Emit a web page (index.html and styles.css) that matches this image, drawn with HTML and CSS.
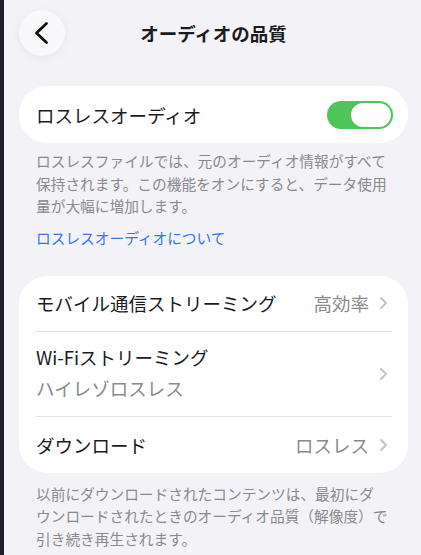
FILE: index.html
```html
<!DOCTYPE html>
<html lang="ja">
<head>
  <meta charset="UTF-8">
  <meta name="viewport" content="width=device-width, initial-scale=1.0">
  <title>オーディオの品質</title>
  <link rel="stylesheet" href="styles.css">
</head>
<body>
  <div class="page">
    <header class="header">
      <button class="back" aria-label="戻る">
        <svg width="16" height="24" viewBox="0 0 16 24">
          <path d="M13.5 2.5 L3.5 12 L13.5 21.5" fill="none" stroke="#111" stroke-width="2.8" stroke-linecap="round" stroke-linejoin="round"/>
        </svg>
      </button>
      <h1>オーディオの品質</h1>
      <span></span>
    </header>

    <section class="card card-toggle">
      <span class="label">ロスレスオーディオ</span>
      <span class="switch"><span class="knob"></span></span>
    </section>

    <p class="note">ロスレスファイルでは、元のオーディオ情報がすべて<br>保持されます。この機能をオンにすると、データ使用<br>量が大幅に増加します。</p>
    <a class="link" href="#">ロスレスオーディオについて</a>

    <section class="card list">
      <div class="row">
        <span class="label">モバイル通信ストリーミング</span>
        <span class="value">高効率</span>
        <svg class="chev" width="9" height="14" viewBox="0 0 9 14"><path d="M2 2 L7 7 L2 12" fill="none" stroke="#c5c5c8" stroke-width="2" stroke-linecap="round" stroke-linejoin="round"/></svg>
      </div>
      <div class="row row-tall">
        <div class="stack">
          <span class="label">Wi-Fiストリーミング</span>
          <span class="sub">ハイレゾロスレス</span>
        </div>
        <svg class="chev" width="9" height="14" viewBox="0 0 9 14"><path d="M2 2 L7 7 L2 12" fill="none" stroke="#c5c5c8" stroke-width="2" stroke-linecap="round" stroke-linejoin="round"/></svg>
      </div>
      <div class="row">
        <span class="label">ダウンロード</span>
        <span class="value">ロスレス</span>
        <svg class="chev" width="9" height="14" viewBox="0 0 9 14"><path d="M2 2 L7 7 L2 12" fill="none" stroke="#c5c5c8" stroke-width="2" stroke-linecap="round" stroke-linejoin="round"/></svg>
      </div>
    </section>

    <p class="note note-foot">以前にダウンロードされたコンテンツは、最初にダ<br>ウンロードされたときのオーディオ品質（解像度）で<br>引き続き再生されます。</p>
  </div>
</body>
</html>
```

FILE: styles.css
```css
* {
  box-sizing: border-box;
}

body {
  margin: 0;
  background: #f2f2f7;
  border-left: 4px solid #1d1d2d;
  min-height: 555px;
  font-family: "Noto Sans CJK JP", "Noto Sans", sans-serif;
  color: #1c1c1e;
}

.page {
  padding: 10px 13px 0 15px;
}

.header {
  display: grid;
  grid-template-columns: 46px 1fr 46px;
  align-items: center;
  height: 46px;
}

.back {
  width: 46px;
  height: 46px;
  border: none;
  border-radius: 50%;
  background: #f9f9fb;
  box-shadow: 0 2px 10px rgba(0, 0, 0, 0.06);
  display: flex;
  align-items: center;
  justify-content: center;
  padding: 0 3px 0 0;
}

h1 {
  margin: 0;
  text-align: center;
  font-size: 18.5px;
  font-weight: 700;
}

.card {
  background: #fff;
  border-radius: 28px;
}

.card-toggle {
  margin-top: 30px;
  height: 57px;
  display: flex;
  align-items: center;
  justify-content: space-between;
  padding: 0 15px 0 17px;
}

.label {
  font-size: 18.5px;
  line-height: 26px;
}

.switch {
  width: 66px;
  height: 28px;
  border-radius: 14px;
  background: #4fc45a;
  display: flex;
  justify-content: flex-end;
  align-items: center;
  padding: 2px;
}

.knob {
  width: 40px;
  height: 24px;
  border-radius: 12px;
  background: #fff;
}

.note {
  margin: 7px 0 0;
  padding: 0 17px;
  font-size: 14.7px;
  line-height: 22.5px;
  color: #8a8a8e;
}

.link {
  display: block;
  margin-top: 9px;
  padding: 0 17px;
  font-size: 14.7px;
  line-height: 22px;
  color: #3478e0;
  text-decoration: none;
}

.list {
  margin-top: 27px;
  padding: 0 20px 0 17px;
}

.row {
  display: flex;
  align-items: center;
  height: 56px;
  border-bottom: 1px solid #e3e3e6;
  margin-right: -4px;
  padding-right: 4px;
}

.row:last-child {
  border-bottom: none;
}

.row-tall {
  height: 85px;
}

.row .label,
.stack {
  flex: 1;
}

.stack {
  display: flex;
  flex-direction: column;
  gap: 4px;
  padding-bottom: 2px;
}

.sub {
  font-size: 18.5px;
  line-height: 28px;
  color: #8a8a8e;
}

.value {
  font-size: 18.5px;
  color: #8a8a8e;
  margin-right: 10px;
}

.chev {
  display: block;
}

.note-foot {
  margin-top: 10px;
}
```
